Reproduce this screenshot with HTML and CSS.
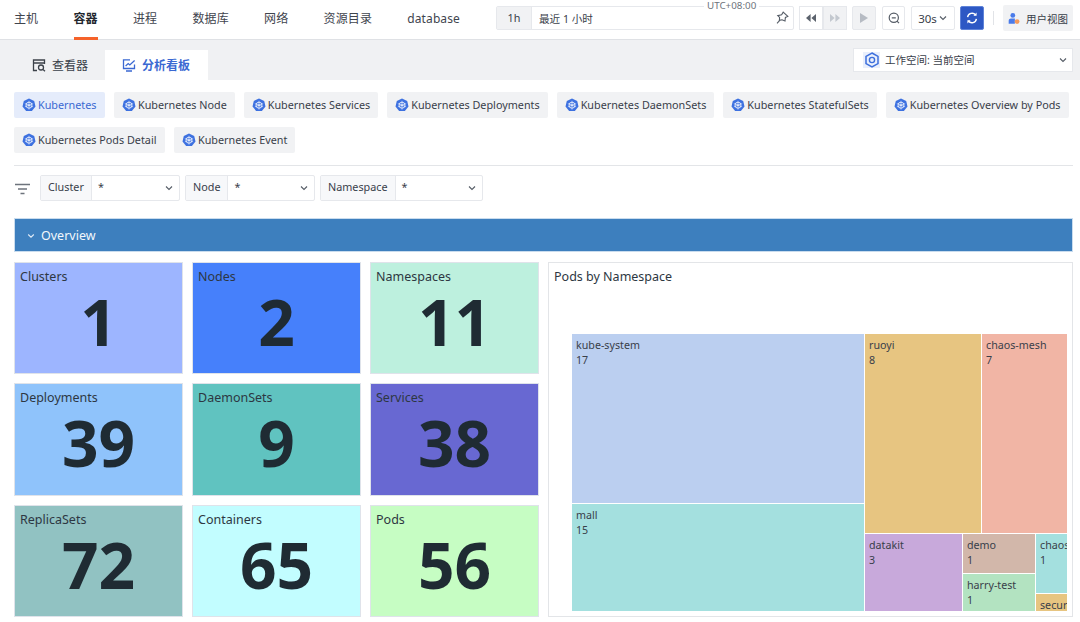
FILE: index.html
```html
<!DOCTYPE html>
<html lang="en">
<head>
  <meta charset="UTF-8" />
  <title>Kubernetes Overview</title>
  <link rel="stylesheet" href="styles.css">
</head>
<body>
  <svg class="defs" width="0" height="0">
    <symbol id="k8s" viewBox="0 0 14 14">
      <path d="M7 .4 12.2 2.9 13.5 8.5 9.9 13H4.1L.5 8.5 1.8 2.9Z" fill="#3d71e0"/>
      <circle cx="7" cy="7.2" r="3" fill="none" stroke="#dfe8fb" stroke-width="1"/>
      <path d="M7 2.8V11.6M2.9 5.6 11.1 8.8M11.1 5.6 2.9 8.8" stroke="#dfe8fb" stroke-width=".7"/>
      <circle cx="7" cy="7.2" r="1" fill="#dfe8fb"/>
    </symbol>
    <symbol id="caret" viewBox="0 0 10 10">
      <path d="M2 3.5 5 6.5 8 3.5" fill="none" stroke="#555c66" stroke-width="1.1"/>
    </symbol>
  </svg>

  <header class="topbar">
    <nav class="nav">
      <a>主机</a>
      <a class="active">容器</a>
      <a>进程</a>
      <a>数据库</a>
      <a>网络</a>
      <a>资源目录</a>
      <a>database</a>
    </nav>
    <div class="tools">
      <div class="picker">
        <span class="tz">UTC+08:00</span>
        <span class="picker-short">1h</span>
        <span class="picker-text">最近 1 小时</span>
        <svg class="pin" width="14" height="14" viewBox="0 0 14 14"><path d="M8.2 1.2 12.8 5.4 10.4 6.4 10 10 7 8.8 4.4 9.4 4.6 6.4 2.8 4.6 6.6 3.8Z" fill="none" stroke="#555c66" stroke-width="1.1"/><path d="M5 9.2 2 12.4" stroke="#555c66" stroke-width="1.1"/></svg>
      </div>
      <div class="btn-pair">
        <span class="tool-btn"><svg width="12" height="10" viewBox="0 0 12 10"><path d="M5.6 1V9L1 5ZM11 1V9L6.4 5Z" fill="#5c636d"/></svg></span>
        <span class="tool-btn off"><svg width="12" height="10" viewBox="0 0 12 10"><path d="M1 1V9L5.6 5ZM6.4 1V9L11 5Z" fill="#c3c8cf"/></svg></span>
      </div>
      <span class="tool-btn single off play"><svg width="10" height="12" viewBox="0 0 10 12"><path d="M1 1V11L9 6Z" fill="#b6bbc3"/></svg></span>
      <span class="tool-btn single zoomout"><svg width="14" height="14" viewBox="0 0 14 14"><circle cx="6.8" cy="6.8" r="4.6" fill="none" stroke="#555c66" stroke-width="1.2"/><path d="M4.8 6.8H8.8M10 10.2 12 12.2" stroke="#555c66" stroke-width="1.2"/></svg></span>
      <span class="tool-btn single interval">30s <svg width="10" height="10"><use href="#caret"/></svg></span>
      <span class="tool-btn single refresh"><svg width="14" height="14" viewBox="0 0 14 14"><path d="M2.6 6.2A4.5 4.5 0 0 1 10.6 4M11.4 7.8A4.5 4.5 0 0 1 3.4 10" fill="none" stroke="#fff" stroke-width="1.4"/><path d="M11.6 1.6V4.8H8.4ZM2.4 12.4V9.2H5.6Z" fill="#fff"/></svg></span>
      <span class="sep"></span>
      <span class="user-view">
        <svg width="12" height="13" viewBox="0 0 14 14"><circle cx="5.6" cy="3.4" r="2.8" fill="#4a7bea"/><path d="M.8 13V9.6C.8 8 2 7 3.4 7H8V13Z" fill="#4a7bea"/><circle cx="10.6" cy="10.6" r="2.8" fill="#f59a5b"/></svg>
        用户视图
      </span>
    </div>
  </header>

  <div class="subbar">
    <div class="tabs">
      <span class="tab">
        <svg width="14" height="14" viewBox="0 0 14 14"><path d="M5 12.5H1.5V2H12.5V6M1.5 5H12.5" fill="none" stroke="#3c424a" stroke-width="1.3"/><circle cx="9" cy="9.5" r="2.5" fill="none" stroke="#3c424a" stroke-width="1.3"/><path d="M11 11.5 13 13.2" stroke="#3c424a" stroke-width="1.3"/></svg>
        查看器
      </span>
      <span class="tab active">
        <svg width="14" height="14" viewBox="0 0 14 14"><path d="M12.5 6.5V10.5H1.5V1.8H8M4 13H10" fill="none" stroke="#3a68d2" stroke-width="1.3"/><path d="M3.6 8 6.2 5.6 7.8 7 12.6 2.6" fill="none" stroke="#3a68d2" stroke-width="1.3"/></svg>
        分析看板
      </span>
    </div>
    <div class="workspace">
      <span class="ws-icon"><svg width="14" height="16" viewBox="0 0 14 16"><path d="M7 1 13 4.4V11.6L7 15 1 11.6V4.4Z" fill="none" stroke="#3d6fdc" stroke-width="1.5"/><circle cx="7" cy="8" r="2.6" fill="none" stroke="#3d6fdc" stroke-width="1.4"/></svg></span>
      <span class="ws-text">工作空间: 当前空间</span>
      <svg width="10" height="10"><use href="#caret"/></svg>
    </div>
  </div>

  <main class="content">
    <div class="pills">
      <span class="pill active"><svg width="14" height="14"><use href="#k8s"/></svg>Kubernetes</span>
      <span class="pill"><svg width="14" height="14"><use href="#k8s"/></svg>Kubernetes Node</span>
      <span class="pill"><svg width="14" height="14"><use href="#k8s"/></svg>Kubernetes Services</span>
      <span class="pill"><svg width="14" height="14"><use href="#k8s"/></svg>Kubernetes Deployments</span>
      <span class="pill"><svg width="14" height="14"><use href="#k8s"/></svg>Kubernetes DaemonSets</span>
      <span class="pill"><svg width="14" height="14"><use href="#k8s"/></svg>Kubernetes StatefulSets</span>
      <span class="pill"><svg width="14" height="14"><use href="#k8s"/></svg>Kubernetes Overview by Pods</span>
      <span class="pill wide"><svg width="14" height="14"><use href="#k8s"/></svg>Kubernetes Pods Detail</span>
      <span class="pill"><svg width="14" height="14"><use href="#k8s"/></svg>Kubernetes Event</span>
    </div>

    <div class="filters">
      <svg class="filter-icon" width="15" height="12" viewBox="0 0 15 12"><path d="M0 1.5H15M3 6H12M5.5 10.5H9.5" stroke="#6d737c" stroke-width="1.5"/></svg>
      <div class="field cluster"><label>Cluster</label><span class="value">*</span><svg width="10" height="10"><use href="#caret"/></svg></div>
      <div class="field node"><label>Node</label><span class="value">*</span><svg width="10" height="10"><use href="#caret"/></svg></div>
      <div class="field namespace"><label>Namespace</label><span class="value">*</span><svg width="10" height="10"><use href="#caret"/></svg></div>
    </div>

    <div class="section-bar">
      <svg width="10" height="10" viewBox="0 0 10 10"><path d="M2.2 3.5 5 6.2 7.8 3.5" fill="none" stroke="#dfeaf6" stroke-width="1.1"/></svg>
      Overview
    </div>

    <div class="dashboard">
      <div class="tiles">
        <div class="tile c-clusters"><h3>Clusters</h3><strong>1</strong></div>
        <div class="tile c-nodes"><h3>Nodes</h3><strong>2</strong></div>
        <div class="tile c-namespaces"><h3>Namespaces</h3><strong>11</strong></div>
        <div class="tile c-deployments"><h3>Deployments</h3><strong>39</strong></div>
        <div class="tile c-daemonsets"><h3>DaemonSets</h3><strong>9</strong></div>
        <div class="tile c-services"><h3>Services</h3><strong>38</strong></div>
        <div class="tile c-replicasets"><h3>ReplicaSets</h3><strong>72</strong></div>
        <div class="tile c-containers"><h3>Containers</h3><strong>65</strong></div>
        <div class="tile c-pods"><h3>Pods</h3><strong>56</strong></div>
      </div>

      <section class="panel">
        <h3>Pods by Namespace</h3>
        <div class="treemap">
          <div class="tm-col tm-left">
            <div class="cell kube">kube-system<br>17</div>
            <div class="cell mall">mall<br>15</div>
          </div>
          <div class="tm-col tm-right">
            <div class="tm-row tm-top">
              <div class="cell ruoyi">ruoyi<br>8</div>
              <div class="cell mesh">chaos-mesh<br>7</div>
            </div>
            <div class="tm-row tm-bottom">
              <div class="cell datakit">datakit<br>3</div>
              <div class="tm-col tm-mid">
                <div class="cell demo">demo<br>1</div>
                <div class="cell harry">harry-test<br>1</div>
              </div>
              <div class="tm-col tm-end">
                <div class="cell chaos">chaos-testing<br>1</div>
                <div class="cell secur">security</div>
              </div>
            </div>
          </div>
        </div>
      </section>
    </div>
  </main>
</body>
</html>
```

FILE: styles.css
```css
* {
  box-sizing: border-box;
}

html, body {
  height: 622px;
  overflow: hidden;
}

body {
  margin: 0;
  background: #fff;
  color: #39404a;
  font-family: "Noto Sans", "Noto Sans CJK SC", sans-serif;
  font-size: 10.8px;
}

.defs {
  position: absolute;
}

svg {
  display: block;
  flex: none;
}

/* top bar */
.topbar {
  height: 40px;
  border-bottom: 1px solid #dfe1e5;
  display: flex;
  justify-content: space-between;
  padding: 0 7px 0 14px;
}

.nav {
  display: flex;
  gap: 35.3px;
}

.nav a {
  height: 40px;
  line-height: 37px;
  font-size: 12px;
  color: #3f454e;
  letter-spacing: .1px;
}

.nav a.active {
  color: #22272e;
  font-weight: 700;
  border-bottom: 3px solid #f5622a;
}

.tools {
  display: flex;
  align-items: center;
  height: 36px;
}

.picker {
  position: relative;
  width: 298px;
  height: 24px;
  display: flex;
  align-items: center;
  border: 1px solid #e6e8ec;
  border-radius: 2px;
  margin-right: 5px;
}

.tz {
  position: absolute;
  top: -8px;
  left: 207px;
  background: #fff;
  padding: 0 3px;
  font-size: 9.8px;
  line-height: 14px;
  color: #6d737c;
}

.picker-short {
  width: 35px;
  height: 100%;
  background: #f1f2f4;
  border-right: 1px solid #e6e8ec;
  text-align: center;
  line-height: 21px;
}

.picker-text {
  flex: 1;
  padding-left: 7px;
  font-size: 10.6px;
}

.pin {
  margin-right: 4px;
}

.btn-pair {
  display: flex;
  margin-right: 5px;
}

.tool-btn {
  width: 24px;
  height: 24px;
  display: flex;
  align-items: center;
  justify-content: center;
  border: 1px solid #e6e8ec;
  background: #fff;
}

.tool-btn.off {
  background: #f1f2f4;
}

.single {
  margin-right: 6px;
  border-radius: 2px;
}

.zoomout {
  width: 23px;
}

.interval {
  width: 44px;
  gap: 1px;
  font-size: 11.5px;
  margin-right: 5px;
}

.refresh {
  background: #2d58c4;
  border-color: #5f83d8;
  margin-right: 9px;
}

.sep {
  width: 1px;
  height: 14px;
  background: #e1e3e7;
  margin-right: 9px;
}

.user-view {
  width: 70px;
  height: 26px;
  display: flex;
  align-items: center;
  gap: 6px;
  padding-left: 5px;
  background: #f1f2f4;
  border-radius: 2px;
  font-size: 10.5px;
}

/* tab strip */
.subbar {
  height: 40px;
  background: #f0f1f3;
  display: flex;
  justify-content: space-between;
  padding: 0 7px 0 14px;
}

.tabs {
  display: flex;
  align-items: flex-end;
}

.tab {
  height: 30px;
  display: flex;
  align-items: center;
  gap: 6px;
  padding: 0 17px 0 18px;
  font-size: 12px;
}

.tab.active {
  background: #fff;
  color: #3a68d2;
  font-weight: 700;
  padding: 0 17px;
  width: 103px;
}

.workspace {
  width: 220px;
  height: 24px;
  margin-top: 8px;
  display: flex;
  align-items: center;
  background: #fff;
  border: 1px solid #e6e8ec;
  padding: 0 4px 0 9px;
  font-size: 10.5px;
}

.ws-icon {
  width: 17px;
  height: 16px;
  background: #e9effc;
  display: flex;
  align-items: center;
  justify-content: center;
  margin-right: 5px;
}

.ws-text {
  flex: 1;
  padding-bottom: 2px;
}

/* pills and filters */
.content {
  padding: 12px 7px 0 14px;
}

.pills {
  display: flex;
  flex-wrap: wrap;
  gap: 9px;
  padding-bottom: 12px;
  border-bottom: 1px solid #e3e5e8;
}

.pill {
  height: 26px;
  display: flex;
  align-items: center;
  gap: 2px;
  padding: 0 8px;
  background: #f1f2f4;
  border-radius: 2px;
  line-height: 24px;
}

.pill.active {
  min-width: 91px;
  background: #e5ecfb;
  color: #3a68d2;
}

.pill.wide {
  min-width: 151px;
}

.filters {
  height: 52px;
  display: flex;
  align-items: flex-start;
  gap: 5px;
  padding-top: 9px;
}

.filter-icon {
  margin: 8px 5px 0 1px;
}

.field {
  height: 26px;
  display: flex;
  align-items: center;
  border: 1px solid #e6e8ec;
  border-radius: 2px;
  padding-right: 5px;
}

.field label {
  height: 100%;
  background: #f7f8fa;
  border-right: 1px solid #e6e8ec;
  padding: 0 7px;
  line-height: 22px;
}

.field .value {
  flex: 1;
  padding: 0 0 4px 6px;
}

.cluster { width: 140px; }
.node { width: 130px; }
.namespace { width: 163px; }

/* overview */
.section-bar {
  height: 34px;
  display: flex;
  align-items: center;
  gap: 5px;
  padding: 1px 0 0 11px;
  background: #3d7fbe;
  border: 1px solid #c9dcee;
  color: #f2f7fc;
  font-size: 12.5px;
}

.dashboard {
  display: flex;
  gap: 9px;
  margin-top: 10px;
}

.tiles {
  width: 525px;
  display: grid;
  grid-template-columns: repeat(3, 169px);
  grid-template-rows: 112px 113px 112px;
  gap: 9px;
}

.tile {
  display: flex;
  flex-direction: column;
  border: 1px solid #dfe3ea;
  padding: 5px 5px 0;
  color: #1f2b33;
}

.tile h3 {
  margin: 0;
  font-size: 12.5px;
  font-weight: 400;
  line-height: 18px;
  color: #2d3742;
}

.tile strong {
  text-align: center;
  font-size: 64px;
  font-weight: 700;
  line-height: 66px;
  margin-top: 3px;
}

.c-clusters { background: #9db5ff; }
.c-nodes { background: #4680fb; }
.c-namespaces { background: #bdf0de; }
.c-deployments { background: #8fc3fb; }
.c-daemonsets { background: #60c3c0; }
.c-services { background: #6868d2; }
.c-replicasets { background: #91c2c2; }
.c-containers { background: #c2fdff; }
.c-pods { background: #c6fdc3; }

/* treemap */
.panel {
  width: 525px;
  height: 355px;
  border: 1px solid #e3e5e8;
  padding: 5px 5px 0 5px;
}

.panel h3 {
  margin: 0 0 48px;
  font-size: 12.5px;
  font-weight: 400;
  line-height: 18px;
  color: #2d3742;
}

.treemap {
  display: flex;
  width: 496px;
  height: 278px;
  margin-left: 18px;
}

.tm-col {
  display: flex;
  flex-direction: column;
}

.tm-row {
  display: flex;
}

.tm-left { width: 293px; }
.tm-right { width: 203px; }
.tm-top { height: 200px; }
.tm-bottom { height: 78px; }
.tm-mid { width: 73px; }
.tm-end { width: 32px; }

.cell {
  overflow: hidden;
  white-space: nowrap;
  border: solid #fff;
  border-width: 0 1px 1px 0;
  padding: 4px;
  font-size: 10.7px;
  line-height: 14.5px;
  color: #39404a;
}

.kube { height: 170px; background: #bbcff0; }
.mall { height: 108px; background: #a4e0df; }
.ruoyi { width: 117px; background: #e7c581; }
.mesh { width: 86px; background: #f1b5a5; }
.datakit { width: 98px; background: #c8a9db; }
.demo { height: 40px; background: #d2b7aa; }
.harry { height: 38px; background: #b3e3c1; }
.chaos { height: 60px; background: #a4e0df; }
.secur { height: 18px; background: #e7c581; }
```
